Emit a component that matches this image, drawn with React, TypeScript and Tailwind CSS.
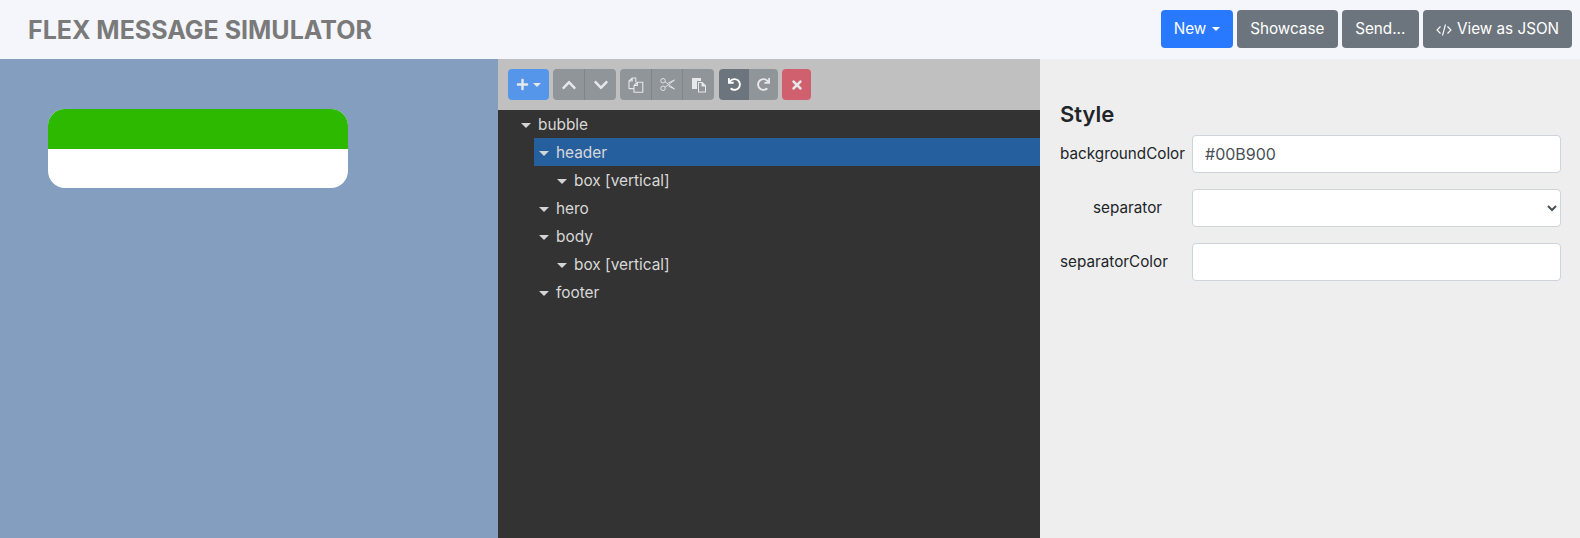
import { FaChevronDown, FaChevronUp, FaPlus, FaRedo, FaTimes, FaUndo } from 'react-icons/fa';
import type { ReactNode } from 'react';

const FONT = "font-['Inter',sans-serif]";

// tree rows, depth decides the indent
const TREE = [
    { label: 'bubble', depth: 0 },
    { label: 'header', depth: 1, selected: true },
    { label: 'box [vertical]', depth: 2 },
    { label: 'hero', depth: 1 },
    { label: 'body', depth: 1 },
    { label: 'box [vertical]', depth: 2 },
    { label: 'footer', depth: 1 },
];

const Caret = () => (
    <span className="mr-[7px] inline-block h-0 w-0 border-x-[5px] border-t-[5px] border-x-transparent border-t-[#d4d4d4]" />
);

const CodeIcon = () => (
    <svg viewBox="0 0 16 14" className="mr-[5px] h-[14px] w-[16px]" fill="none" stroke="currentColor" strokeWidth="1.1">
        <path d="M4.5 3.5 1 7l3.5 3.5M11.5 3.5 15 7l-3.5 3.5M9.5 1.5l-3 11" />
    </svg>
);

const CopyIcon = () => (
    <svg viewBox="0 0 16 16" className="h-[16px] w-[16px]" fill="none" stroke="currentColor" strokeWidth="1.1">
        <path d="M1 4 4.2 1h3.6v4.2M5.8 11.6H1V4h3.2V1" />
        <path d="M6 8.4 9.4 5.2h5.4v10H6zM9.4 5.2v3.2H6" />
    </svg>
);

const ScissorsIcon = () => (
    <svg viewBox="0 0 16 16" className="h-[15px] w-[15px]" fill="none" stroke="currentColor" strokeWidth="1">
        <circle cx="3.2" cy="4" r="2.4" />
        <circle cx="3.2" cy="12" r="2.4" />
        <path d="M5.4 5 15.5 12.8M5.4 11 15.5 3.2M15.5 3.2 9 6.2M15.5 12.8 9 9.8" />
    </svg>
);

const PasteIcon = () => (
    <svg viewBox="0 0 16 16" className="h-[16px] w-[16px]" fill="currentColor">
        <path d="M1 1h9v3H6v8H1z" />
        <path d="M7 5h4.5L15 8.5V15.5H7zM8 6v8.5h6V9.5h-3.5V6z" fillRule="evenodd" />
    </svg>
);

const ToolButton = ({ children, className = '' }: { children: ReactNode; className?: string }) => (
    <button className={`flex h-[31px] items-center justify-center text-[#e6e8ea] ${className}`}>{children}</button>
);

const TopButton = ({ children, className = '' }: { children: ReactNode; className?: string }) => (
    <button className={`flex h-[38px] items-center justify-center rounded-[4px] pt-[2px] text-[15.25px] text-white ${className}`}>
        {children}
    </button>
);

const FormRow = ({ label, center, children }: { label: string; center?: boolean; children: ReactNode }) => (
    <div className="flex h-[38px] items-center">
        <label className={`w-[132px] text-[15.25px] text-[#212529] ${center ? 'pl-[33px]' : ''}`}>{label}</label>
        {children}
    </div>
);

export default function App() {
    return (
        <div className={`flex h-[538px] w-[1580px] flex-col overflow-hidden ${FONT}`}>
            <header className="flex h-[59px] shrink-0 items-center justify-between bg-[#f4f6fb] pl-[28px] pr-[8px]">
                <h1 className="mt-[2px] text-[25px] font-bold text-[#7a7a7a]">FLEX MESSAGE SIMULATOR</h1>
                <div className="mb-[2px] flex gap-[4px]">
                    <TopButton className="w-[72px] gap-[6px] bg-[#2979ff]">
                        New
                        <span className="mb-[2px] h-0 w-0 border-x-[4.5px] border-t-[4.5px] border-x-transparent border-t-white" />
                    </TopButton>
                    <TopButton className="w-[100.5px] bg-[#6c757d]">Showcase</TopButton>
                    <TopButton className="w-[77.5px] bg-[#6c757d]">Send...</TopButton>
                    <TopButton className="w-[149px] bg-[#6c757d]">
                        <CodeIcon />
                        View as JSON
                    </TopButton>
                </div>
            </header>

            <main className="flex flex-1">
                <section className="w-[498px] bg-[#849ebf] pl-[48px] pt-[50px]">
                    <div className="w-[300px] overflow-hidden rounded-[17px] bg-white">
                        <div className="h-[40px] bg-[#2db900]" />
                        <div className="h-[39px]" />
                    </div>
                </section>

                <section className="flex w-[542px] flex-col bg-[#333333]">
                    <div className="flex h-[51px] items-center gap-[4px] bg-[#c0c0c0] pl-[10px]">
                        <ToolButton className="w-[41px] gap-[4px] rounded-[4px] bg-[#5596ea]">
                            <FaPlus size={13} />
                            <span className="h-0 w-0 border-x-[4px] border-t-[4px] border-x-transparent border-t-[#e6e8ea]" />
                        </ToolButton>
                        <div className="flex overflow-hidden rounded-[4px] bg-[#8f9599]">
                            <ToolButton className="w-[32px] border-r border-[#7f868b]"><FaChevronUp size={16} /></ToolButton>
                            <ToolButton className="w-[31px]"><FaChevronDown size={16} /></ToolButton>
                        </div>
                        <div className="flex overflow-hidden rounded-[4px] bg-[#8f9599]">
                            <ToolButton className="w-[32px] border-r border-[#7f868b]"><CopyIcon /></ToolButton>
                            <ToolButton className="w-[31px] border-r border-[#7f868b]"><ScissorsIcon /></ToolButton>
                            <ToolButton className="w-[31px]"><PasteIcon /></ToolButton>
                        </div>
                        <div className="ml-[1px] flex overflow-hidden rounded-[4px]">
                            <ToolButton className="w-[30px] bg-[#6c757d] text-white"><FaUndo size={13} /></ToolButton>
                            <ToolButton className="w-[29px] bg-[#8f9599]"><FaRedo size={13} /></ToolButton>
                        </div>
                        <ToolButton className="w-[29px] rounded-[4px] bg-[#d1606f]"><FaTimes size={14} /></ToolButton>
                    </div>
                    <ul className="pl-[36px] text-[15.4px] text-[#d8d8d8]">
                        {TREE.map((row, i) => (
                            <li
                                key={i}
                                className={`flex h-[28px] items-center pl-[5px] pt-[2px] ${row.selected ? 'bg-[#265f9e]' : ''} ${
                                    row.depth === 0 ? '-ml-[18px]' : row.depth === 1 ? '' : 'ml-[18px]'
                                }`}
                            >
                                <Caret />
                                {row.label}
                            </li>
                        ))}
                    </ul>
                </section>

                <section className="flex-1 bg-[#eeeeee] pl-[20px] pr-[19px] pt-[38px]">
                    <h2 className="mb-[4px] text-[22px] font-semibold leading-[34px] text-[#212529]">Style</h2>
                    <div className="flex flex-col gap-[16px]">
                        <FormRow label="backgroundColor">
                            <input
                                readOnly
                                value="#00B900"
                                className="h-[38px] flex-1 rounded-[4px] border border-[#ced4da] bg-white px-[12px] text-[16px] text-[#495057]"
                            />
                        </FormRow>
                        <FormRow label="separator" center>
                            <select className="h-[38px] flex-1 rounded-[4px] border border-[#ced4da] bg-white px-[12px] text-[16px] text-[#495057]">
                                <option />
                            </select>
                        </FormRow>
                        <FormRow label="separatorColor">
                            <input readOnly className="h-[38px] flex-1 rounded-[4px] border border-[#ced4da] bg-white px-[12px]" />
                        </FormRow>
                    </div>
                </section>
            </main>
        </div>
    );
}
